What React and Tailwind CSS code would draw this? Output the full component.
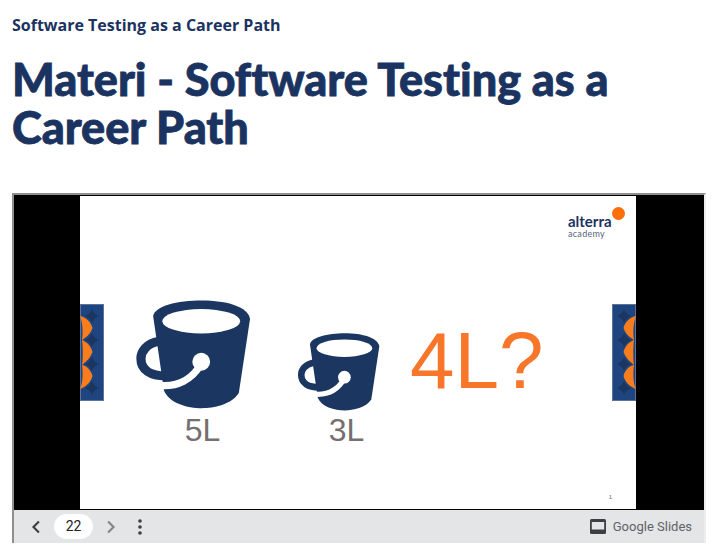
import React from "react";

function Bucket({ className }) {
  return (
    <svg viewBox="222 28 352 330" className={className}>
      <path d="M277 76 C282 46 350 29 425 29 C500 29 566 48 571 85 L537 310 C515 345 460 356 425 356 C380 356 325 340 310 302 Z" fill="#1b3660" />
      <path d="M295 153 C255 160 240 185 240 205 C240 240 270 258 315 258" fill="none" stroke="#1b3660" strokeWidth="28" />
      <ellipse cx="423" cy="92" rx="118" ry="37" fill="#fff" />
      <path d="M298 287 C350 291 395 270 422 222" fill="none" stroke="#fff" strokeWidth="22" />
      <circle cx="423" cy="215" r="27" fill="#fff" />
    </svg>
  );
}

function Pattern({ flip, className }) {
  const circles = [];
  for (let y = 0; y <= 100; y += 24) {
    for (let x = 0; x <= 24; x += 24) {
      circles.push(<circle key={`${x}-${y}`} cx={x} cy={y} r="13" fill="#1f4580" />);
    }
  }
  const leaves = [
    "M0 12 C6 13 11 18 12.5 24 C11 29 7 33 2 36 C3 30 3 20 0 12 Z",
    "M2 36 C7 38 11 42 12.5 48 C11 53 7 57 2 61 C3 55 3 44 2 36 Z",
    "M2 61 C7 62 11 66 12.5 72 C11 78 6 83 0 85 C3 79 3 69 2 61 Z",
  ];
  return (
    <svg viewBox="0 0 24 97" className={className} style={flip ? { transform: "scaleX(-1)" } : undefined}>
      <rect width="24" height="97" fill="#1b3660" />
      {circles}
      <rect x="0.5" y="0.5" width="23" height="96" fill="none" stroke="#5c7397" strokeWidth="1" />
      {leaves.map((d) => (
        <path key={d} d={d} fill="#f97d1c" />
      ))}
    </svg>
  );
}

export default function App() {
  return (
    <div className="w-[725px] h-[559px] bg-white px-3 overflow-hidden">
      <p className="pt-[14px] text-[16px] leading-[22px] font-bold text-[#1b3360] [font-family:'Open_Sans',sans-serif]">
        Software Testing as a Career Path
      </p>
      <h1 className="mt-[19px] text-[45px] leading-[48px] font-black text-[#1b3360] [font-family:Lato,sans-serif] [font-variant-ligatures:none] [-webkit-text-stroke:0.8px_#1b3360]">
        Materi - Software Testing as a Career Path
      </h1>
      <div className="mt-[42px] w-[694px] h-[350px] border-2 border-t-[#8f8f8f] border-l-[#8f8f8f] border-r-[#eeeeee] border-b-0 flex flex-col">
        <div className="h-[315px] bg-black py-px flex justify-center">
          <div className="relative w-[556px] h-[313px] bg-white mr-[2px] flex items-start pl-[55px] pt-[104px] [font-family:'Liberation_Sans',sans-serif]">
            <Pattern className="absolute left-0 top-[108px] w-[24px] h-[97px]" />
            <Pattern flip className="absolute right-0 top-[108px] w-[24px] h-[97px]" />
            <div className="flex flex-col items-center w-[116px]">
              <Bucket className="w-[116px] h-[109px]" />
              <span className="mt-[4px] pl-[19px] text-[32px] leading-[34px] text-[#757070]">5L</span>
            </div>
            <div className="ml-[46px] mt-[33px] flex flex-col items-center w-[83px]">
              <Bucket className="w-[83px] h-[78px]" />
              <span className="mt-[2px] pl-[16px] text-[32px] leading-[34px] text-[#757070]">3L</span>
            </div>
            <span className="ml-[30px] mt-[11px] text-[80px] leading-[100px] text-[#f7762a]">4L?</span>
            <div className="absolute left-[488px] top-[11px] w-[57px] flex flex-col [font-family:Lato,sans-serif]">
              <div className="self-end w-[13px] h-[13px] rounded-full bg-[#fb6f05]" />
              <span className="-mt-[6px] text-[15px] leading-[15px] font-bold text-[#1b3360]">alterra</span>
              <span className="text-[9px] leading-[9px] tracking-[0.3px] text-[#566377]">academy</span>
            </div>
            <span className="absolute right-[24px] bottom-[8px] text-[6px] leading-[8px] text-[#5a6b88]">1</span>
          </div>
        </div>
        <div className="h-[33px] bg-[#e4e5e7] flex items-center [font-family:Roboto,sans-serif]">
          <svg viewBox="0 0 24 24" className="ml-[12px] w-[20px] h-[20px]" fill="none" stroke="#3c4043" strokeWidth="2.6">
            <path d="M15.5 5.5 L9 12 L15.5 18.5" />
          </svg>
          <div className="ml-[8px] w-[39px] h-[25px] rounded-full bg-white flex items-center justify-center text-[14px] text-[#202124]">22</div>
          <svg viewBox="0 0 24 24" className="ml-[8px] w-[20px] h-[20px]" fill="none" stroke="#80868b" strokeWidth="2.6">
            <path d="M8.5 5.5 L15 12 L8.5 18.5" />
          </svg>
          <svg viewBox="0 0 24 24" className="ml-[9px] w-[20px] h-[20px]" fill="#3c4043">
            <circle cx="12" cy="4.8" r="2.2" />
            <circle cx="12" cy="12" r="2.2" />
            <circle cx="12" cy="19.2" r="2.2" />
          </svg>
          <div className="ml-auto mr-[12px] flex items-center gap-[7px]">
            <svg viewBox="0 0 16 15" className="w-[16px] h-[15px]">
              <rect width="16" height="15" rx="1.5" fill="#3c4043" />
              <rect x="1.8" y="3" width="12.4" height="7.5" fill="#e4e5e7" />
            </svg>
            <span className="text-[13px] leading-[16px] text-[#5f6368]">Google Slides</span>
          </div>
        </div>
      </div>
    </div>
  );
}
